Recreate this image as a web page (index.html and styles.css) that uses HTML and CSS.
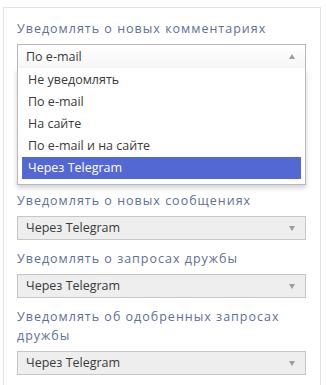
FILE: index.html
```html
<!DOCTYPE html>
<html lang="ru">
<head>
<meta charset="utf-8">
<link rel="stylesheet" href="styles.css">
</head>
<body>
<div class="card">
  <div class="field field-open">
    <div class="label">Уведомлять о новых комментариях</div>
    <div class="select open">
      <span class="value">По e-mail</span>
      <span class="arrow up"></span>
    </div>
    <ul class="list">
      <li>Не уведомлять</li>
      <li>По e-mail</li>
      <li>На сайте</li>
      <li>По e-mail и на сайте</li>
      <li class="active">Через Telegram</li>
    </ul>
  </div>
  <div class="field">
    <div class="label">Уведомлять о новых сообщениях</div>
    <div class="select">
      <span class="value">Через Telegram</span>
      <span class="arrow"></span>
    </div>
  </div>
  <div class="field">
    <div class="label">Уведомлять о запросах дружбы</div>
    <div class="select">
      <span class="value">Через Telegram</span>
      <span class="arrow"></span>
    </div>
  </div>
  <div class="field">
    <div class="label">Уведомлять об одобренных запросах дружбы</div>
    <div class="select">
      <span class="value">Через Telegram</span>
      <span class="arrow"></span>
    </div>
  </div>
</div>
</body>
</html>
```
FILE: styles.css
```css
html, body {
  margin: 0;
  padding: 0;
  background: #ffffff;
}
body {
  font-family: "Open Sans", "Noto Sans", sans-serif;
  font-size: 12.5px;
  color: #3a3a3a;
}
.card {
  margin: 7px 5px 0 3px;
  border: 1px solid #dfe3e6;
  padding: 11px 14px 40px 13px;
  background: #ffffff;
}
.field {
  display: flex;
  flex-direction: column;
  margin-bottom: 9px;
}
.field-open {
  margin-bottom: 6px;
}
.label {
  color: #5d7096;
  letter-spacing: 1px;
  line-height: 19px;
  margin-bottom: 6px;
}
.select {
  height: 24px;
  box-sizing: border-box;
  border: 1px solid #c6c6c6;
  background: #eeeeee;
  display: flex;
  align-items: center;
  justify-content: space-between;
  padding: 0 10px 0 8px;
}
.select.open {
  background: linear-gradient(#ffffff, #f6f6f6);
  border-color: #b8b8b8;
  border-bottom: none;
}
.value {
  line-height: 22px;
}
.arrow {
  width: 0;
  height: 0;
  border-left: 3px solid transparent;
  border-right: 3px solid transparent;
  border-top: 5px solid #9d9d9d;
}
.arrow.up {
  border-top: none;
  border-bottom: 5px solid #9d9d9d;
}
.list {
  list-style: none;
  margin: 0;
  padding: 1px 4px 5px 4px;
  border: 1px solid #b8b8b8;
  border-top: none;
  background: #ffffff;
  box-shadow: 0 3px 5px rgba(0, 0, 0, 0.18);
}
.list li {
  height: 22px;
  line-height: 22px;
  padding-left: 6px;
}
.list li.active {
  background: #5468d4;
  color: #ffffff;
}
```
